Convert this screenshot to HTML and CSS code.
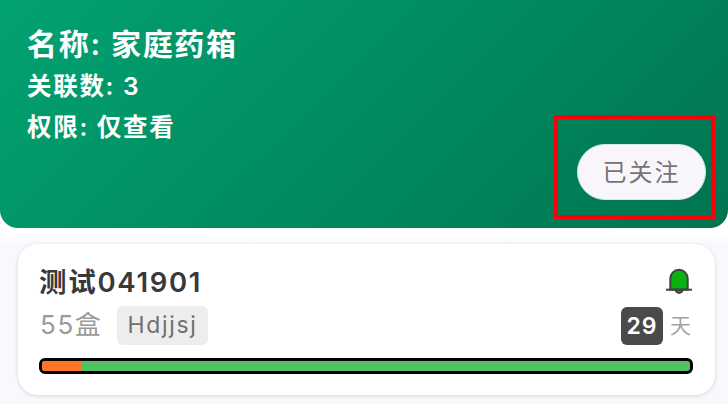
FILE: index.html
```html
<!DOCTYPE html>
<html lang="zh-CN">
<head>
  <meta charset="UTF-8">
  <title>家庭药箱</title>
  <link rel="stylesheet" href="styles.css">
</head>
<body>

<header class="cabecera">
  <div class="info">
    <h1>名称: <span>家庭药箱</span></h1>
    <p>关联数: <span>3</span></p>
    <p>权限: <span>仅查看</span></p>
  </div>
  <div class="marco">
    <button class="seguir">已关注</button>
  </div>
</header>

<main class="tarjeta">
  <div class="fila titulo">
    <h2>测试041901</h2>
    <svg class="campana" viewBox="0 0 28 28" width="28" height="28">
      <path d="M10.8 23a3.3 3 0 0 0 6.6 0z" fill="#16a51b" stroke="#3c4540" stroke-width="2"/>
      <path d="M5.3 22.5V11.5a8.7 8.7 0 0 1 17.4 0V22.5z" fill="#09b20e" stroke="#3c4540" stroke-width="2"/>
      <path d="M1 22.7h26" stroke="#3c4540" stroke-width="2"/>
    </svg>
  </div>
  <div class="fila detalle">
    <span class="cantidad">55盒</span>
    <span class="etiqueta">Hdjjsj</span>
    <span class="dias">29</span>
    <span class="unidad">天</span>
  </div>
  <div class="barra">
    <div class="usado"></div>
  </div>
</main>

</body>
</html>
```

FILE: styles.css
```css
* {
  box-sizing: border-box;
}

body {
  font-family: Inter, 'Noto Sans CJK SC', sans-serif;
  background-color: #f7f9fd;
  margin: 0;
  height: 404px;
  overflow: hidden;
  background-image: linear-gradient(#fff 236px, #f7f9fd 244px);
}

h1, h2, p {
  margin: 0;
}

.cabecera {
  display: flex;
  justify-content: space-between;
  height: 228px;
  padding: 22px 13px 9px 27px;
  border-radius: 0 0 18px 18px;
  background: linear-gradient(135deg, #02a271 0%, #007450 100%);
  color: white;
}

.info h1 {
  font-size: 30px;
  line-height: 44px;
  letter-spacing: 1.7px;
  font-weight: 600;
}

.info p {
  font-size: 24.5px;
  line-height: 41px;
  letter-spacing: 1.7px;
  font-weight: 600;
}

.marco {
  align-self: flex-end;
  width: 161px;
  height: 104px;
  padding: 25px 5px 0 19px;
  border: 4px solid #fa0008;
}

.seguir {
  display: block;
  width: 129px;
  height: 56px;
  padding: 0 0 4px 0;
  border: 1px solid #d3e9e2;
  border-radius: 28px;
  background-color: #f8f6fb;
  color: #747474;
  font-family: inherit;
  font-size: 24px;
  letter-spacing: 2px;
}

.tarjeta {
  width: 697px;
  height: 151px;
  margin: 16px 0 0 18px;
  padding: 18px 22px 0 21px;
  border-radius: 20px;
  background-color: white;
  box-shadow: 0 1px 4px rgba(0, 0, 0, 0.14);
}

.fila {
  display: flex;
  align-items: center;
}

.titulo {
  justify-content: space-between;
  height: 40px;
}

.titulo h2 {
  padding-bottom: 5px;
  color: #39393b;
  font-size: 27.5px;
  font-weight: 600;
  letter-spacing: 1.7px;
}

.campana {
  margin-bottom: 3px;
}

.detalle {
  height: 47px;
}

.cantidad {
  width: 78px;
  padding: 0 0 6px 1px;
  color: #9a9a9a;
  font-size: 26px;
  letter-spacing: 1.6px;
}

.etiqueta {
  width: 91px;
  height: 39px;
  border-radius: 6px;
  background-color: #ededed;
  color: #707070;
  font-size: 23px;
  line-height: 38px;
  letter-spacing: 1.7px;
  text-align: center;
}

.dias {
  width: 42px;
  height: 38px;
  margin-left: auto;
  border-radius: 6px;
  background-color: #4b494c;
  color: white;
  font-size: 23px;
  font-weight: 600;
  line-height: 38px;
  letter-spacing: 1px;
  text-align: center;
}

.unidad {
  margin: 0 2px 0 7px;
  padding-bottom: 3px;
  color: #a4a4a4;
  font-size: 21px;
}

.barra {
  height: 16px;
  margin-top: 9px;
  border: 3px solid #000;
  border-radius: 6px;
  background-color: #52c164;
  overflow: hidden;
}

.usado {
  width: 6.1%;
  height: 100%;
  background-color: #fe7527;
}
```
